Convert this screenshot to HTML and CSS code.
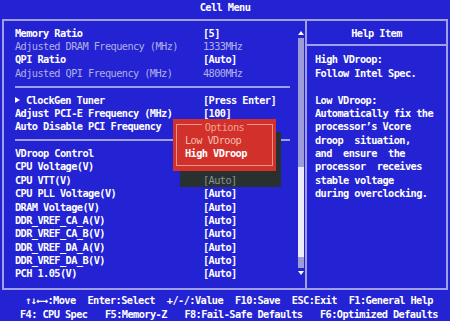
FILE: index.html
```html
<!DOCTYPE html>
<html lang="en">
<head>
    <meta charset="UTF-8">
    <title>Cell Menu</title>
    <link rel="stylesheet" href="styles.css">
</head>
<body>

    <!-- Title -->
    <div class="title">Cell Menu</div>

    <div class="frame">
        <div class="main">
            <div class="list">
                <div class="row"><span>Memory Ratio</span><span>[5]</span></div>
                <div class="row off"><span>Adjusted DRAM Frequency (MHz)</span><span>1333MHz</span></div>
                <div class="row"><span>QPI Ratio</span><span>[Auto]</span></div>
                <div class="row off"><span>Adjusted QPI Frequency (MHz)</span><span>4800MHz</span></div>
                <div class="sep"></div>
                <div class="row"><span><i class="tri"></i>ClockGen Tuner</span><span>[Press Enter]</span></div>
                <div class="row"><span>Adjust PCI-E Frequency (MHz)</span><span>[100]</span></div>
                <div class="row"><span>Auto Disable PCI Frequency</span><span></span></div>
                <div class="sep"></div>
                <div class="row"><span>VDroop Control</span><span></span></div>
                <div class="row"><span>CPU Voltage(V)</span><span></span></div>
                <div class="row"><span>CPU VTT(V)</span><span class="shaded">[Auto]</span></div>
                <div class="row"><span>CPU PLL Voltage(V)</span><span>[Auto]</span></div>
                <div class="row"><span>DRAM Voltage(V)</span><span>[Auto]</span></div>
                <div class="row"><span>DDR_VREF_CA_A(V)</span><span>[Auto]</span></div>
                <div class="row"><span>DDR_VREF_CA_B(V)</span><span>[Auto]</span></div>
                <div class="row"><span>DDR_VREF_DA_A(V)</span><span>[Auto]</span></div>
                <div class="row"><span>DDR_VREF_DA_B(V)</span><span>[Auto]</span></div>
                <div class="row"><span>PCH 1.05(V)</span><span>[Auto]</span></div>
            </div>

            <!-- Scroll bar -->
            <div class="scroll">
                <span class="arrow up"></span>
                <div class="track"><div class="thumb"></div></div>
                <span class="arrow down"></span>
            </div>
        </div>

        <!-- Help panel -->
        <div class="help">
            <div class="help-title">Help Item</div>
            <div class="help-text">High VDroop:
Follow Intel Spec.

Low VDroop:
Automatically fix the
processor’s Vcore
droop  situation,
and  ensure  the
processor  receives
stable voltage
during overclocking.</div>
        </div>

        <!-- Options popup -->
        <div class="shadow"></div>
        <div class="popup">
            <div class="popup-box">
                <div class="popup-title">Options</div>
                <div class="opt">Low VDroop</div>
                <div class="opt on">High VDroop</div>
            </div>
        </div>
    </div>

    <!-- Key help -->
    <div class="footer">
        <div class="keys"><span>↑↓←→:Move</span><span>Enter:Select</span><span>+/-/:Value</span><span>F10:Save</span><span>ESC:Exit</span><span>F1:General Help</span></div>
        <div class="keys second"><span>F4: CPU Spec</span><span>F5:Memory-Z</span><span>F8:Fail-Safe Defaults</span><span>F6:Optimized Defaults</span></div>
    </div>

</body>
</html>
```

FILE: styles.css
```css
/* General page: BIOS blue screen */
body {
    margin: 0;
    width: 450px;
    height: 321px;
    overflow: hidden;
    background-color: #2323d4;
    color: #ffffff;
    font-family: "DejaVu Sans Mono", monospace;
    font-weight: bold;
    font-size: 10.3px;
    line-height: 13.375px;
    letter-spacing: -0.58px;
}

/* Title bar */
.title {
    height: 19px;
    line-height: 14px;
    text-align: center;
}

/* Main frame */
.frame {
    position: relative;
    display: grid;
    grid-template-columns: 301px 1fr;
    width: 446px;
    height: 271px;
    margin-left: 2px;
    border: 2px solid #a0a0e8;
    box-sizing: border-box;
}

.main {
    display: flex;
}

.list {
    flex: 1;
    padding: 5.7px 8px 0 11px;
}

.row {
    display: grid;
    grid-template-columns: 188px 1fr;
    height: 13.375px;
    white-space: pre;
}

.row.off {
    color: #b0b0e4; /* greyed out items */
    font-weight: normal;
}

.sep {
    height: 13.375px;
    display: flex;
    align-items: center;
}

.sep::after {
    content: "";
    flex: 1;
    border-top: 2px solid #a0a0e8;
}

.tri {
    display: inline-block;
    border-left: 5px solid #ffffff;
    border-top: 3px solid transparent;
    border-bottom: 3px solid transparent;
    margin-right: 6px;
    vertical-align: 1px;
}

.shaded {
    position: relative;
    z-index: 2;
    color: #8c9494;
    font-weight: normal;
}

/* Scroll bar */
.scroll {
    width: 6px;
    margin-right: 1px;
    padding-top: 10px;
    display: flex;
    flex-direction: column;
    align-items: center;
}

.arrow {
    width: 0;
    height: 0;
    border-left: 3px solid transparent;
    border-right: 3px solid transparent;
}

.arrow.up {
    border-bottom: 4px solid #ffffff;
}

.arrow.down {
    border-top: 4px solid #ffffff;
}

.track {
    width: 6px;
    height: 230px;
    margin: 3px 0;
    padding-bottom: 11px;
    box-sizing: border-box;
    background-color: #9c9cd8;
    display: flex;
    flex-direction: column;
    justify-content: flex-end;
}

.thumb {
    height: 90px;
    background-color: #ececfa;
}

/* Help panel */
.help {
    border-left: 2px solid #a0a0e8;
}

.help-title {
    text-align: center;
    padding: 5.7px 0 4px;
    border-bottom: 2px solid #a0a0e8;
}

.help-text {
    padding: 7.35px 0 0 8px;
    white-space: pre;
}

/* Options popup */
.shadow {
    position: absolute;
    left: 176px;
    top: 111px;
    width: 101px;
    height: 55px;
    background-color: #283030;
    z-index: 1;
}

.popup {
    position: absolute;
    left: 169px;
    top: 98px;
    width: 103px;
    height: 52px;
    box-sizing: border-box;
    padding: 5px 3px;
    background-color: #d2302a;
    z-index: 3;
}

.popup-box {
    height: 100%;
    box-sizing: border-box;
    border: 1px solid #ee9488;
    padding: 0 8px;
}

.popup-title {
    display: table;
    margin: -4px auto 0;
    padding: 0 3px;
    background-color: #d2302a;
    color: #f0a494;
    font-weight: normal;
    line-height: 13px;
}

.opt {
    line-height: 13px;
    color: #f4bcac;
    font-weight: normal;
    white-space: pre;
}

.opt.on {
    color: #ffffff;
    font-weight: bold;
}

/* Footer key help */
.footer {
    padding-top: 4.3px;
}

.keys {
    display: flex;
    justify-content: space-between;
    padding: 0 17px 0 25px;
    white-space: pre;
}

.keys.second {
    padding: 0 12px 0 20px;
}
```
